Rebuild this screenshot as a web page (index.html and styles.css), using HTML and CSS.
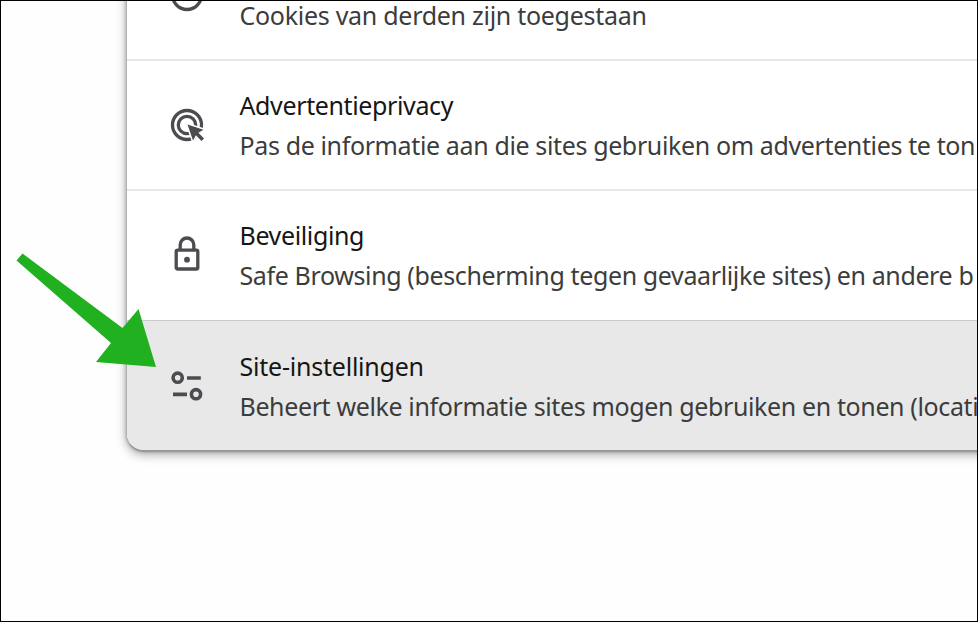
FILE: index.html
```html
<!DOCTYPE html>
<html lang="nl">
<head>
    <meta charset="UTF-8">
    <meta name="viewport" content="width=device-width, initial-scale=1.0">
    <title>Privacy en beveiliging</title>
    <link rel="stylesheet" href="styles.css">
</head>
<body>
    <div class="page">
        <div class="card">
            <div class="row first">
                <svg class="icon" viewBox="0 0 40 40">
                    <circle cx="20" cy="20" r="14.5"/>
                </svg>
                <div class="text">
                    <div class="desc cookies">Cookies van derden zijn toegestaan</div>
                </div>
            </div>
            <div class="row">
                <svg class="icon" viewBox="0 0 40 40">
                    <circle cx="20" cy="20" r="14.5"/>
                    <circle cx="20" cy="20" r="8.7"/>
                    <path class="cursor" d="M20.5 19.5 36.5 24.7 31.4 27.8 37 33.4 34.5 35.9 28.9 30.3 26 35.6Z"/>
                </svg>
                <div class="text">
                    <div class="title">Advertentieprivacy</div>
                    <div class="desc">Pas de informatie aan die sites gebruiken om advertenties te ton</div>
                </div>
            </div>
            <div class="row last-plain">
                <svg class="icon" viewBox="0 0 40 40">
                    <rect x="9.2" y="15.2" width="21.6" height="18.8" rx="1.5"/>
                    <path d="M13.2 15V9.8a6.8 6.8 0 0 1 13.6 0V15"/>
                    <circle class="dot" cx="20" cy="24.7" r="2.9"/>
                </svg>
                <div class="text">
                    <div class="title">Beveiliging</div>
                    <div class="desc">Safe Browsing (bescherming tegen gevaarlijke sites) en andere b</div>
                </div>
            </div>
            <div class="row active">
                <svg class="icon" viewBox="0 0 40 40">
                    <circle cx="10.7" cy="11.7" r="4.6"/>
                    <path d="M20 12h13.8M6 28.4h14"/>
                    <circle cx="29" cy="28.2" r="4.6"/>
                </svg>
                <div class="text">
                    <div class="title site-title">Site-instellingen</div>
                    <div class="desc">Beheert welke informatie sites mogen gebruiken en tonen (locati</div>
                </div>
            </div>
        </div>
        <svg class="arrow" viewBox="0 0 160 380">
            <path d="M16.5 260.5 22.5 253.5 122.5 328 138.5 309 156 367 96 362 111 343Z"/>
        </svg>
    </div>
</body>
</html>
```

FILE: styles.css
```css
* {
    box-sizing: border-box;
}
body {
    margin: 0;
    background-color: #fefefe;
    font-family: "Noto Sans", "Open Sans", sans-serif;
}
.page {
    position: relative;
    height: 622px;
    overflow: hidden;
    padding-left: 126px;
}
/* dark frame over everything */
.page::after {
    content: "";
    position: absolute;
    inset: 0;
    border: 1px solid #000;
}
.card {
    width: 900px;
    margin-top: -69px;
    background-color: #fff;
    border-left: 1px solid #b0b0b0;
    border-bottom: 2px solid #999;
    border-radius: 0 0 0 18px;
    box-shadow: 0 3px 10px 1px rgba(0, 0, 0, 0.25), 0 0 3px 1px rgba(0, 0, 0, 0.15);
    overflow: hidden;
}
.row {
    display: flex;
    align-items: center;
    height: 130px;
    padding-left: 40px;
    border-bottom: 2px solid #e8e8e8;
}
.row.first .text {
    padding-top: 40px;
}
.row.last-plain {
    height: 129px;
    padding-bottom: 1px;
    border-bottom: none;
}
.row.active {
    background-color: #e8e8e8;
    border-top: 1px solid #ccc;
    border-bottom: none;
}
.icon {
    flex: none;
    width: 40px;
    height: 40px;
    margin-right: 32.5px;
    fill: none;
    stroke: #4a4c50;
    stroke-width: 3.3;
}
.active .icon {
    stroke-width: 3.6;
}
.icon .cursor {
    fill: #4a4c50;
    stroke: #fff;
    stroke-width: 3;
    paint-order: stroke;
}
.icon .dot {
    fill: #4a4c50;
    stroke: none;
}
.text {
    white-space: nowrap;
    font-size: 25px;
    line-height: 40px;
    letter-spacing: -0.37px;
}
.title {
    color: #161616;
}
.site-title {
    letter-spacing: -0.22px;
}
.desc {
    color: #3c3c3c;
}
.cookies {
    letter-spacing: -0.28px;
}
.arrow {
    position: absolute;
    left: 0;
    top: 0;
    width: 160px;
    height: 380px;
    fill: #20b020;
}
```
